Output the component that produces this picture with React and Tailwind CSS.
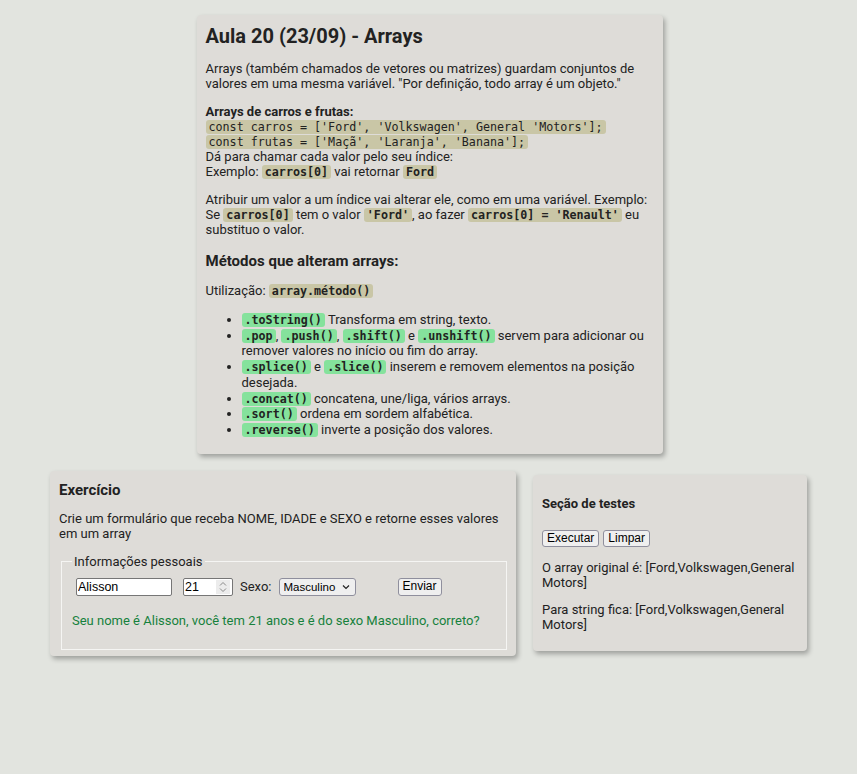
import React from 'react';

const Code = ({ children, green = false, bold = true }) => (
  <code
    className={
      "font-['DejaVu_Sans_Mono',monospace] text-[11.7px] leading-none px-[3px] rounded-[3px] " +
      (bold ? 'font-bold ' : '') +
      (green ? 'bg-[#85e29c]' : 'bg-[#c9c6a6]')
    }
  >
    {children}
  </code>
);

const Btn = ({ children, className = '' }) => (
  <button
    className={
      "font-['Liberation_Sans',Arial,sans-serif] text-[12px] leading-[15px] text-black bg-[#efefef] border border-[#8f8f9d] rounded-[3px] px-[4px] py-[0px] " +
      className
    }
  >
    {children}
  </button>
);

const App = () => {
  return (
    <div className="min-h-[774px] bg-[#e2e4df] text-[#222] text-[13px] leading-[normal] font-['Roboto',sans-serif] pt-[15px]">
      {/* Cartão principal */}
      <div className="w-[466px] mx-auto translate-x-[1px] bg-[#dedcd8] rounded-[4px] shadow-[2px_3px_5px_rgba(0,0,0,0.3)] px-[9px] pt-[9px] pb-[16px]">
        <h1 className="text-[20px] font-bold leading-[normal]">Aula 20 (23/09) - Arrays</h1>
        <p className="mt-[13px]">
          Arrays (também chamados de vetores ou matrizes) guardam conjuntos de valores em uma mesma variável. "Por definição, todo array é um objeto."
        </p>
        <p className="mt-[13px]">
          <b>Arrays de carros e frutas:</b>
          <br />
          <Code bold={false}>const carros = ['Ford', 'Volkswagen', General 'Motors'];</Code>
          <br />
          <Code bold={false}>const frutas = ['Maçã', 'Laranja', 'Banana'];</Code>
          <br />
          Dá para chamar cada valor pelo seu índice:
          <br />
          Exemplo: <Code>carros[0]</Code> vai retornar <Code>Ford</Code>
        </p>
        <p className="mt-[13px]">
          Atribuir um valor a um índice vai alterar ele, como em uma variável. Exemplo: Se <Code>carros[0]</Code> tem o valor{' '}
          <Code>'Ford'</Code>, ao fazer <Code>carros[0] = 'Renault'</Code> eu substituo o valor.
        </p>
        <h3 className="mt-[15px] text-[15px] font-bold">Métodos que alteram arrays:</h3>
        <p className="mt-[13px]">
          Utilização: <Code>array.método()</Code>
        </p>
        <ul className="mt-[14px] list-disc pl-[36px] leading-[15.7px]">
          <li>
            <Code green>.toString()</Code> Transforma em string, texto.
          </li>
          <li>
            <Code green>.pop</Code>, <Code green>.push()</Code>, <Code green>.shift()</Code> e <Code green>.unshift()</Code> servem para adicionar ou
            remover valores no início ou fim do array.
          </li>
          <li>
            <Code green>.splice()</Code> e <Code green>.slice()</Code> inserem e removem elementos na posição desejada.
          </li>
          <li>
            <Code green>.concat()</Code> concatena, une/liga, vários arrays.
          </li>
          <li>
            <Code green>.sort()</Code> ordena em sordem alfabética.
          </li>
          <li>
            <Code green>.reverse()</Code> inverte a posição dos valores.
          </li>
        </ul>
      </div>

      {/* Linha de baixo */}
      <div className="flex justify-center items-center gap-[17px] mt-[17px]">
        {/* Exercício */}
        <div className="w-[466px] bg-[#dedcd8] rounded-[4px] shadow-[2px_3px_5px_rgba(0,0,0,0.3)] px-[9px] pt-[10px] pb-[6px]">
          <h3 className="text-[15px] font-bold">Exercício</h3>
          <p className="mt-[12px]">Crie um formulário que receba NOME, IDADE e SEXO e retorne esses valores em um array</p>
          <fieldset className="mt-[13px] ml-[2px] border border-[#f5f5f3] px-[10px] pb-[7px]">
            <legend className="px-[2px]">Informações pessoais</legend>
            <div className="flex items-center h-[18px] mt-[9px]">
              <input
                type="text"
                defaultValue="Alisson"
                className="ml-[4px] w-[96px] h-[18px] bg-white border border-[#767676] rounded-[2px] px-[1px] font-['Liberation_Sans',Arial,sans-serif] text-[12.5px] text-black"
              />
              <div className="relative ml-[11px] w-[50px] h-[18px] bg-white border border-[#767676] rounded-[2px]">
                <input
                  type="text"
                  defaultValue="21"
                  className="w-[30px] h-[16px] px-[1px] font-['Liberation_Sans',Arial,sans-serif] text-[12.5px] text-black"
                />
                <div className="absolute right-[2px] top-[1px] bottom-[1px] w-[14px] bg-[#ececec] flex items-center justify-center">
                  <svg width="8" height="12" viewBox="0 0 8 12" fill="none" stroke="#8a8a8a" strokeWidth="1">
                    <path d="M1 4.5 L4 1.5 L7 4.5" />
                    <path d="M1 7.5 L4 10.5 L7 7.5" />
                  </svg>
                </div>
              </div>
              <span className="ml-[7px]">Sexo:</span>
              <div className="relative ml-[7px] w-[77px] h-[18px]">
                <select className="appearance-none w-full h-full bg-[#efefef] border border-[#8f8f9d] rounded-[3px] pl-[4px] font-['Liberation_Sans',Arial,sans-serif] text-[11.5px] text-black">
                  <option>Masculino</option>
                  <option>Feminino</option>
                </select>
                <svg
                  className="absolute right-[6px] top-[6px] pointer-events-none"
                  width="8"
                  height="6"
                  viewBox="0 0 8 6"
                  fill="none"
                  stroke="#222"
                  strokeWidth="1.2"
                >
                  <path d="M1 1.5 L4 4.5 L7 1.5" />
                </svg>
              </div>
              <Btn className="ml-[42px] h-[18px]">Enviar</Btn>
            </div>
            <p className="mt-[17px] mb-[14px] text-[#16813c]">
              Seu nome é Alisson, você tem 21 anos e é do sexo Masculino, correto?
            </p>
          </fieldset>
        </div>

        {/* Seção de testes */}
        <div className="w-[274px] bg-[#dedcd8] rounded-[4px] shadow-[2px_3px_5px_rgba(0,0,0,0.3)] px-[9px] pt-[21px] pb-[19px]">
          <h4 className="font-bold">Seção de testes</h4>
          <div className="mt-[19px] flex gap-[4px]">
            <Btn>Executar</Btn>
            <Btn>Limpar</Btn>
          </div>
          <p className="mt-[13px]">O array original é: [Ford,Volkswagen,General Motors]</p>
          <p className="mt-[12px]">Para string fica: [Ford,Volkswagen,General Motors]</p>
        </div>
      </div>
    </div>
  );
};

export default App;
